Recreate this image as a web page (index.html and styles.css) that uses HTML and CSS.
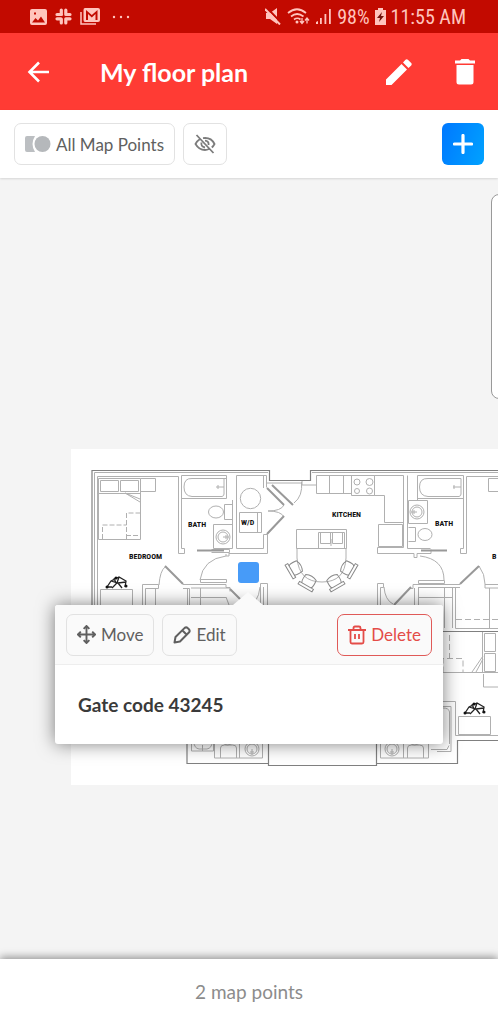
FILE: index.html
```
<!DOCTYPE html>
<html lang="en">
<head>
    <meta charset="UTF-8">
    <meta name="viewport" content="width=device-width, initial-scale=1">
    <title>My floor plan</title>
    <link rel="stylesheet" href="styles.css">
</head>
<body>

<div class="status-bar">
    <div class="status-left">
        <svg width="17" height="16" viewBox="0 0 17 16"><path fill="currentColor" fill-rule="evenodd" d="M2 0h13q2 0 2 2v12q0 2-2 2H2q-2 0-2-2V2q0-2 2-2zM2 13.500h13l-4-6-3 4-2.500-2.500zM4 3.500h2v2H4z"/></svg>
        <svg width="17" height="17" viewBox="0 0 17 17"><g stroke="currentColor" stroke-width="3.200" stroke-linecap="round"><path d="M6.300 2v4M2 6.500h4.500M10.800 2v4.500M11 6.500h4M2 10.800h4M6.300 11v4M10.800 10.800h4.200M10.800 11v4"/></g></svg>
        <svg width="20" height="17" viewBox="0 0 20 17"><path d="M1 4v12h15" fill="none" stroke="currentColor" stroke-width="1.500"/><path fill="currentColor" fill-rule="evenodd" d="M5 0h13q2 0 2 2v10q0 2-2 2H5q-1.500 0-1.500-2V2Q3.500 0 5 0zM6 2v10h2V6l3.800 3.500L15.500 6v6h2V2l-5.700 5z"/></svg>
        <svg class="dots" width="18" height="4" viewBox="0 0 18 4"><g fill="currentColor"><circle cx="2" cy="2" r="1.200"/><circle cx="9" cy="2" r="1.200"/><circle cx="16" cy="2" r="1.200"/></g></svg>
    </div>
    <div class="status-right">
        <svg width="17" height="17" viewBox="0 0 17 17"><path fill="currentColor" d="M1 5h4l7-5v16l-7-5H1z"/><path d="M1 -1l15.500 16" stroke="#c20a00" stroke-width="2"/><path d="M0 1l15 15.500" stroke="currentColor" stroke-width="2"/></svg>
        <svg width="23" height="17" viewBox="0 0 23 17"><g fill="none" stroke="currentColor" stroke-width="1.700"><path d="M1 5q9-7.500 18 0M4 8.500q6-5 12.500 0M7 11.500q3.500-2.500 6.500 0"/><path d="M15 10v5M13 13l2 2.500 2-2.500M20 15.500v-5M18 12.500l2-2.500 2 2.500" stroke-width="1.300"/></g><circle cx="10" cy="14" r="1.500" fill="currentColor"/></svg>
        <svg width="17" height="17" viewBox="0 0 17 17"><path fill="currentColor" d="M1 14l2-1v3H1zM5 10h1.800v6H5zM9.500 6h1.800v10H9.500zM14 1h1.800v15H14z"/></svg>
        <span>98%</span>
        <svg width="11" height="17" viewBox="0 0 11 17"><path fill="currentColor" d="M3 0h5v2h3v15H0V2h3z"/><path fill="#70110b" d="M7 4L2 10h3l-1 4 5-6H6z"/></svg>
        <span>11:55 AM</span>
    </div>
</div>

<header class="app-bar">
    <button class="icon-button" aria-label="Back">
        <svg width="24" height="24" viewBox="0 0 24 24"><path d="M22 12H3M12 2.500L2.500 12l9.500 9.500" fill="none" stroke="#fff" stroke-width="2.600"/></svg>
    </button>
    <h1>My floor plan</h1>
    <button class="icon-button" aria-label="Edit floor plan">
        <svg width="26" height="26" viewBox="0 0 26 26"><path fill="#fff" d="M0 20.500L15.500 5l5.500 5.500L5.500 26H0zM17 3.500l2.500-2.700q1.200-1 2.400 0l3.300 3.300q1 1.200 0 2.400L22.500 9z"/></svg>
    </button>
    <button class="icon-button" aria-label="Delete floor plan">
        <svg width="20" height="26" viewBox="0 0 20 26"><path fill="#fff" d="M0 1.500h5L6.500 0h7L15 1.500h5v3H0zM1.500 6h17v17q0 2.500-2.500 2.500H4q-2.500 0-2.500-2.500z"/></svg>
    </button>
</header>

<div class="toolbar">
    <button class="button">
        <svg width="26" height="18" viewBox="0 0 26 18"><path fill="#bcbfc2" d="M2 1h8q-5 8 0 16H2q-2 0-2-2V3q0-2 2-2z"/><circle cx="17.500" cy="9" r="8" fill="#b5b8bb"/></svg>
        All Map Points
    </button>
    <button class="button button-square" aria-label="Hide map points">
        <svg width="22" height="20" viewBox="0 0 22 20"><g fill="none" stroke="#7c7c7c" stroke-width="1.800"><path d="M6 5Q3 7 1.500 10q3.500 6 9.500 6 2 0 4-1M9 4.200Q17 3 20.500 10q-1 2-2.700 3.500M7.500 8.500q-1 4 3.500 5M11 6.700q4 .3 3.600 4.300M2.500 1l17 18"/></g></svg>
    </button>
    <button class="button-add" aria-label="Add map point">
        <svg width="20" height="20" viewBox="0 0 20 20"><path d="M10 1.500v17M1.500 10h17" stroke="#fff" stroke-width="3.200" stroke-linecap="round"/></svg>
    </button>
</div>

<main class="map">
    <div class="side-panel"></div>

    <svg class="plan" width="640" height="336" viewBox="71 449 640 336">
        <defs>
            <g id="chair">
                <path d="M-6-4Q-7 4-5 5H5Q7 4 6-4Q0-7-6-4zM-8 5H8V8H-8z"/>
            </g>
            <g id="desk-chair">
                <path d="M-9 3L-5-3 3-7 10-3 9 3M-5-3L2-1 10-2M3-7L1-1-4 4M2-1l4 5M-9 3l5 0M-2-6l2 5" stroke="#222" stroke-width="1.300"/>
                <g fill="#111" stroke="none"><circle cx="-9" cy="3" r="1.500"/><circle cx="0" cy="-6" r="1.500"/><circle cx="10" cy="2" r="1.500"/></g>
            </g>
            <g id="sink">
                <circle r="7"/><circle r="5"/><path d="M0 0h6M3-2v4"/>
            </g>
        </defs>
        <rect x="71" y="449" width="640" height="336" fill="#fff"/>

        <g class="walls">
            <path d="M92 610V470.500H269.500V480.500H310.500V470.500H711M711 740.500H457.500V763.500H376.500V765.500H268.500V763.500H187V740M443 631.500H711M268.500 740v24M376.500 740v24M266 605.500h112"/>
        </g>
        <g class="lines">
            <path d="M94.500 610V472.500H268M312 472.500H711"/>
            <!-- left bedroom -->
            <path d="M97.500 610V476.500H178.500V553.500H184.500V548.500H181.500V475.500H226.500V498.500H181.500"/>
            <path d="M98.500 478.500h42v61h-42zM98.500 493.500h42M100.500 480.500h18v11h-18zM120.500 480.500h18v11h-18zM140.500 478.500h15v13h-15M125 493l15 9M125 493l15 6"/>
            <path d="M126.500 539v-26h14M102.500 539v-14h24M126 535.500h14" stroke-dasharray="5 2"/>
            <path d="M142.500 610V584.500H158.500V588.500H145.500V610M155.500 588V610M159 585Q160 571 165 567M189.500 610V588.500H183M187.500 588v20M200.500 588v20"/>
            <path d="M100.500 610V589.500h32V610"/>
            <!-- left bath -->
            <path d="M226 478.500H192Q184 478 184 487T192 496.500H222Q224 496 224 494V478M216 487h8M218 485v4"/>
            <path d="M224.500 508V504.500H232.500V519.500H224.500V508M213.500 524.500H232.500V548.500H213.500zM232.500 500v48M211.500 549.500h18v3h-18"/>
            <ellipse cx="216" cy="512" rx="7.500" ry="6"/>
            <path d="M229 553v3h-3v-2M200 580Q203 559 226 556M200.500 579.500h26v3h-26zM183 584.500h43v3h4v4M191 588h39M191 597.500h35M226 597l3 8M267.500 610V583.500H260.500V610M263.500 587V610M260 587q-1 9-4 13"/>
            <!-- laundry -->
            <path d="M236.500 475.500h30v12M236.500 475.500v73h27v-14h4v19H229M263.500 476v12M239.500 512.500h22v20h-22zM257.500 512.500v20"/>
            <circle cx="250.500" cy="498.500" r="10.200"/>
            <path d="M284 505Q281 511 268 511Q281 511 284 517M302 481v4h14M301.500 482Q303 496 294 503M266 483h35"/>
            <!-- kitchen -->
            <path d="M316.500 475.500h58v20h10v27h19M316.500 475.500v18h35M329.500 475.500v18M343.500 475.500v18M351.500 475.500v20h23v-20H403.500V547.500H377.500V553.500H414v4h3v-4h14v-4M378.500 524.500h24v22h-24z"/>
            <circle cx="357" cy="482" r="3"/><circle cx="369.500" cy="482" r="3.500"/><circle cx="357" cy="491" r="2.500"/><circle cx="369.500" cy="491" r="3"/>
            <path d="M296.500 529.500h50v19h-50zM318.500 532.500h26v16h-26zM320.500 532.500h10v11h-10zM332.500 532.500h10v11h-10zM331 539v7M297 548V558Q299 582 322 582T346 558V548"/>
            <g class="chairs">
                <use href="#chair" transform="translate(296 568) rotate(60)"/>
                <use href="#chair" transform="translate(309 581) rotate(30)"/>
                <use href="#chair" transform="translate(334 581) rotate(-30)"/>
                <use href="#chair" transform="translate(347 568) rotate(-60)"/>
            </g>
            <!-- right bath -->
            <path d="M407.500 548.500V475.500M417.500 475.500H463.500V498.500H417.500zM461 478.500H428Q419.500 478 419.500 487T428 496.500H459Q461 496 461 494zM453 487h8M454 485v4M417.500 498v2"/>
            <path d="M408.500 500.500h19v23h-19zM408.500 527.500H415.500V541.500H408.500M407.500 548.500h23M463.500 498V548.500H460.500V553.500H466.500V476.500H711"/>
            <ellipse cx="425" cy="534.500" rx="7" ry="6"/>
            <path d="M420 556Q444 559 444 580M418.500 580.500h26v3h-26zM377.500 610V583.500H383.500V587.500H380.500V610M384 587Q385 600 393 604M460 584.500H413v4h-4M460 587.500H418M414.500 588v18M418.500 588v40M418 597.500h35M444.500 588V628M452.500 588V628M455.500 588V628.500H711M479 566Q485 574 485 584V588H711M485 584.500H711M489.500 588V628"/>
            <path d="M456 619.500h60M443 672.500v-14h20v14M449.500 635v24" stroke-dasharray="6 3"/>
            <path d="M488.500 478.500h15v13h-15z"/>
            <!-- lower right bedroom -->
            <path d="M443 672.500h55M482.500 672V632M484.500 633.500h11v18h-11zM484.500 653.500h11v18h-11zM483.500 674v13h15M472 672l11-16M476 672l7-13"/>
            <path d="M443 701.500h12.500v34H711M443 706.500h8v45h-14M449.500 744V712Q449 708 443 708M431 749.500h16l2-4M458.500 716.500h32v18h-32z"/>
            <!-- lower baths -->
            <path d="M191.500 742v9h22v-9M194 742q0 6 5 7h8q5-1 5-7M202.500 745v6M214.500 742v16h48v-16M220.500 758v-10q0-3 4-3h8q4 0 4 3v10M239.500 742v16M222 742q5 6 12 0"/>
            <path d="M380.500 742v16h48v-16M403.500 742v16M407.500 758v-10q0-3 4-3h8q4 0 4 3v10M409 742q5 6 12 0"/>
            <use href="#sink" transform="translate(223 537)"/>
            <use href="#sink" transform="translate(417 512) rotate(180)"/>
            <use href="#sink" transform="translate(252 749) rotate(90)"/>
            <use href="#sink" transform="translate(392 749) rotate(90)"/>
            <use href="#desk-chair" transform="translate(116 584)"/>
            <use href="#desk-chair" transform="translate(474 710)"/>
        </g>
        <g class="doors">
            <path d="M165 566l18 18M197 550.500h27M267 488l17 17M272 485l21 20M267 534l17-18M421 550.500h26M460 584l19-18M394 605l17-18M230 589l12 12"/>
        </g>
        <g class="room-names">
            <text x="129" y="559">BEDROOM</text>
            <text x="188" y="527">BATH</text>
            <text x="241" y="525">W/D</text>
            <text x="332" y="517">KITCHEN</text>
            <text x="435" y="526">BATH</text>
            <text x="492" y="559">B</text>
        </g>
    </svg>

    <div class="pin"></div>

    <section class="popup">
        <div class="popup-actions">
            <button class="button">
                <svg width="19" height="19" viewBox="0 0 20 20"><path d="M10 1.500v17M1.500 10h17M7 4l3-3 3 3M7 16l3 3 3-3M4 7l-3 3 3 3M16 7l3 3-3 3" fill="none" stroke="currentColor" stroke-width="2"/></svg>
                Move
            </button>
            <button class="button">
                <svg width="18" height="18" viewBox="0 0 18 18"><path d="M1.500 16.500l1-5.500L11.700 1.900q1.500-1.200 3 .2l1.200 1.200q1.400 1.500.2 3L7 15.500zM9.500 4.500L13.500 8.500" fill="none" stroke="currentColor" stroke-width="2" stroke-linejoin="round"/></svg>
                Edit
            </button>
            <button class="button button-delete">
                <svg width="18" height="20" viewBox="0 0 18 20"><path d="M0 5h18M5.500 5V3q0-1.500 1.500-1.500h4q1.500 0 1.500 1.500v2M2.500 5v12q0 1.500 1.500 1.500h10q1.500 0 1.500-1.500V5M7 9v5M11 9v5" fill="none" stroke="currentColor" stroke-width="1.800"/></svg>
                Delete
            </button>
        </div>
        <p class="popup-text">Gate code 43245</p>
    </section>
</main>

<footer class="footer">2 map points</footer>

</body>
</html>
```
FILE: styles.css
```
* {
    box-sizing: border-box;
}
body {
    margin: 0;
    min-height: 100vh;
    display: flex;
    flex-direction: column;
    font-family: Lato, "Liberation Sans", sans-serif;
    background-color: #f4f4f4;
}
svg {
    display: block;
    flex-shrink: 0;
}
button {
    font-family: inherit;
    cursor: pointer;
}

/* status bar */
.status-bar {
    display: flex;
    justify-content: space-between;
    align-items: center;
    height: 33px;
    padding: 0 32px 0 30px;
    background-color: #c20a00;
    color: #ffc4bd;
    font-family: "Roboto Condensed", Roboto, sans-serif;
    font-size: 20px;
}
.status-left {
    display: flex;
    align-items: center;
    gap: 8px;
}
.status-left .dots {
    margin-left: 4px;
}
.status-right {
    display: flex;
    align-items: center;
    gap: 5px;
}

/* app bar */
.app-bar {
    display: flex;
    align-items: center;
    height: 77px;
    padding: 0 14px 0 20px;
    background-color: #ff3b34;
    color: #fff;
}
.app-bar h1 {
    flex: 1;
    margin: 0 0 0 42px;
    font-size: 25px;
    line-height: 30px;
}
.icon-button {
    display: flex;
    justify-content: center;
    align-items: center;
    width: 38px;
    height: 38px;
    padding: 0;
    border: none;
    background: none;
}
.icon-button + .icon-button {
    margin-left: 28px;
}

/* toolbar */
.toolbar {
    display: flex;
    align-items: center;
    gap: 8px;
    height: 68px;
    padding: 0 14px;
    background-color: #fff;
    box-shadow: 0 1px 2px rgba(0, 0, 0, 0.12);
}
.button {
    display: flex;
    align-items: center;
    gap: 5px;
    height: 42px;
    padding: 0 10px;
    border: 1px solid #e2e2e2;
    border-radius: 7px;
    background: none;
    color: #606060;
    font-size: 17px;
    white-space: nowrap;
}
.button-square {
    justify-content: center;
    width: 44px;
}
.button-add {
    display: flex;
    justify-content: center;
    align-items: center;
    width: 42px;
    height: 42px;
    margin-left: auto;
    padding: 0;
    border: none;
    border-radius: 6px;
    background: linear-gradient(110deg, #0078ff, #00a2ff);
}

/* map */
.map {
    flex: 1;
    position: relative;
    overflow: hidden;
    min-height: 600px;
}
.side-panel {
    position: absolute;
    top: 16px;
    right: -20px;
    width: 27px;
    height: 205px;
    border: 1px solid #999;
    border-radius: 8px;
    background-color: #fff;
}
.plan {
    position: absolute;
    left: 71px;
    top: 271px;
}
.walls {
    fill: none;
    stroke: #808080;
    stroke-width: 1.2;
}
.lines {
    fill: none;
    stroke: #b0b0b0;
    stroke-width: 1;
}
.chairs {
    stroke: #888;
}
.doors {
    fill: none;
    stroke: #999;
    stroke-width: 2;
}
.room-names {
    fill: #111;
    font-family: "Roboto Condensed", Roboto, sans-serif;
    font-size: 8px;
    font-weight: bold;
}
.pin {
    position: absolute;
    left: 238px;
    top: 384px;
    width: 21px;
    height: 21px;
    border-radius: 3px;
    background-color: #479bf8;
}
.popup {
    position: absolute;
    left: 55px;
    top: 427px;
    width: 388px;
    border-radius: 3px;
    background-color: #fff;
    box-shadow: 0 0 18px rgba(0, 0, 0, 0.5);
}
.popup::before {
    content: "";
    position: absolute;
    left: 178px;
    top: -13px;
    border: 15px solid transparent;
    border-top: none;
    border-bottom: 13px solid #fafafa;
}
.popup-actions {
    display: flex;
    align-items: center;
    gap: 8px;
    height: 60px;
    padding: 0 11px;
    border-bottom: 1px solid #eee;
    border-radius: 3px 3px 0 0;
    background-color: #fafafa;
}
.popup .button-delete {
    margin-left: auto;
    border-color: #e05a58;
    color: #e44c48;
}
.popup-text {
    margin: 0;
    padding: 28px 23px 27px;
    color: #3a3a3a;
    font-size: 19px;
    font-weight: bold;
    line-height: 24px;
}

.footer {
    position: relative;
    padding: 20px;
    background-color: #fff;
    box-shadow: 0 -2px 8px rgba(0, 0, 0, 0.4);
    color: #8c8c8c;
    font-size: 19px;
    line-height: 25px;
    text-align: center;
}
```
